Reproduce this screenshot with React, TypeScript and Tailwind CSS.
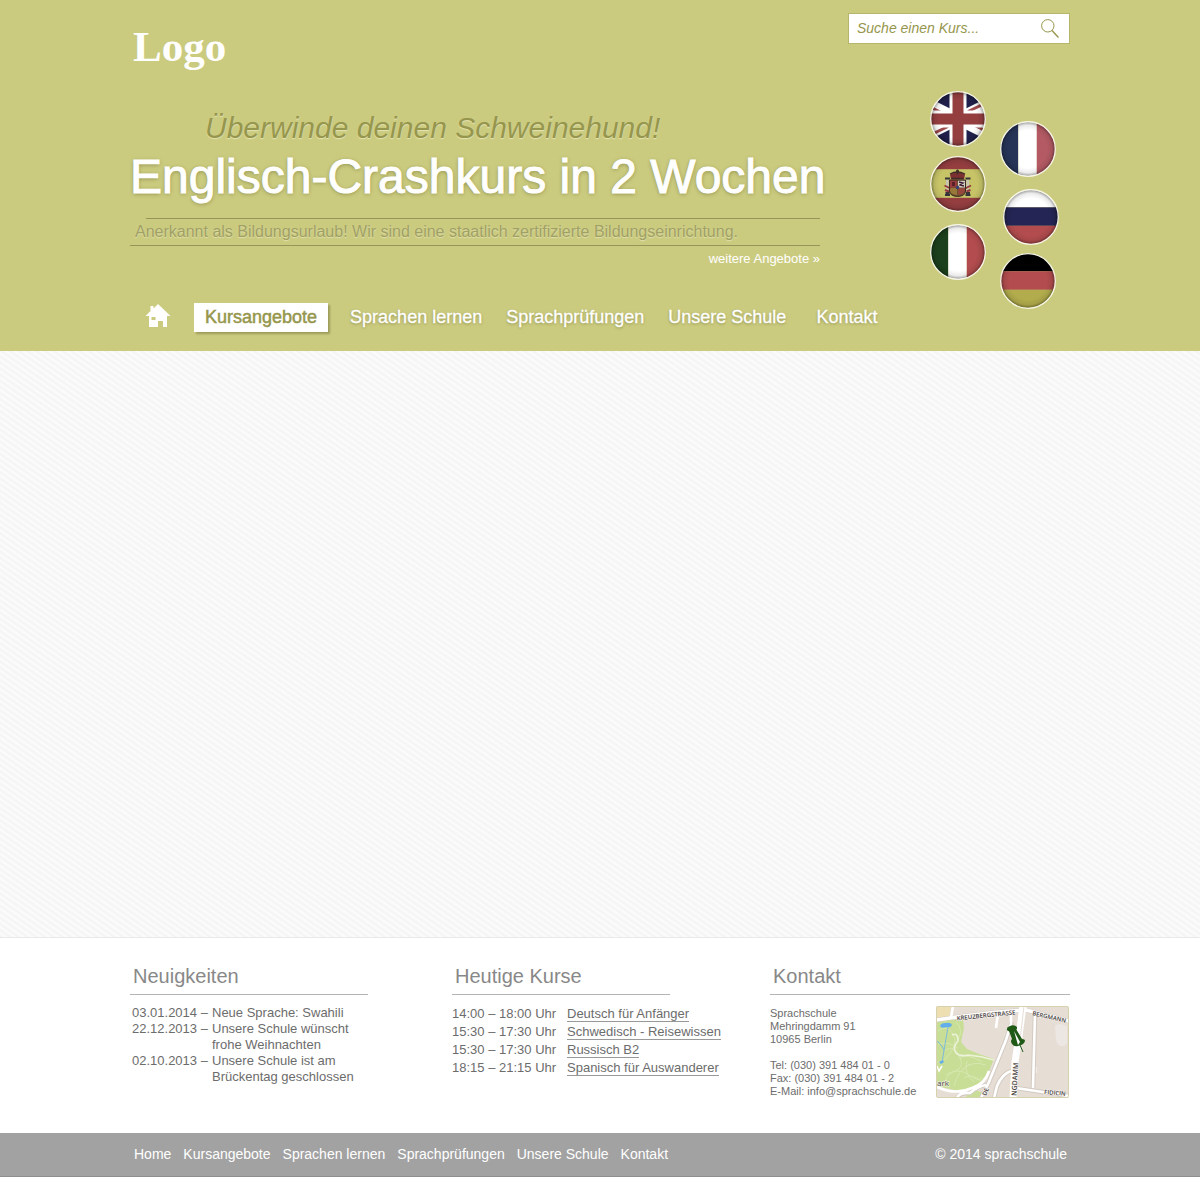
import { useId, type ReactNode } from "react";

const menu = ["Sprachen lernen", "Sprachprüfungen", "Unsere Schule", "Kontakt"];
const footerMenu = ["Home", "Kursangebote", ...menu];

const news = [
  { date: "03.01.2014", lines: ["Neue Sprache: Swahili"] },
  { date: "22.12.2013", lines: ["Unsere Schule wünscht", "frohe Weihnachten"] },
  { date: "02.10.2013", lines: ["Unsere Schule ist am", "Brückentag geschlossen"] },
];

const courses = [
  { time: "14:00 – 18:00 Uhr", name: "Deutsch für Anfänger" },
  { time: "15:30 – 17:30 Uhr", name: "Schwedisch - Reisewissen" },
  { time: "15:30 – 17:30 Uhr", name: "Russisch B2" },
  { time: "18:15 – 21:15 Uhr", name: "Spanisch für Auswanderer" },
];

function Flag({ label, className = "", children }: { label: string; className?: string; children: ReactNode }) {
  const id = useId();
  return (
    <a href="#" aria-label={label} className={`block size-14 ${className}`}>
      <svg viewBox="0 0 56 56" className="size-14">
        <defs>
          <clipPath id={`${id}c`}>
            <circle cx="28" cy="28" r="27.5" />
          </clipPath>
          <radialGradient id={`${id}g`}>
            <stop offset="0.7" stopColor="#000" stopOpacity="0" />
            <stop offset="0.88" stopColor="#000" stopOpacity="0.08" />
            <stop offset="1" stopColor="#000" stopOpacity="0.38" />
          </radialGradient>
        </defs>
        <g clipPath={`url(#${id}c)`}>{children}</g>
        <circle cx="28" cy="28" r="27" fill={`url(#${id}g)`} />
        <circle cx="28" cy="28" r="27.3" fill="none" stroke="#f7f7e6" strokeWidth="1.3" />
      </svg>
    </a>
  );
}

function Stripes({ colors, vertical }: { colors: [string, string, string]; vertical?: boolean }) {
  return (
    <g transform={vertical ? "matrix(0 1 1 0 0 0)" : undefined}>
      <rect width="56" height="18.3" fill={colors[0]} />
      <rect y="18.3" width="56" height="18.5" fill={colors[1]} />
      <rect y="36.8" width="56" height="19.2" fill={colors[2]} />
    </g>
  );
}

function UkFlag() {
  return (
    <>
      <rect width="56" height="56" fill="#20204c" />
      <path d="M-28 0 84 56M84 0-28 56" stroke="#fff" strokeWidth="11.5" />
      <path d="M-4 14 14 23M60 42 42 33M62 9 38 20.500M-6 47 18 35.500" stroke="#a04a4c" strokeWidth="3" />
      <path d="M28 0V56M0 28H56" stroke="#fff" strokeWidth="17" />
      <path d="M28 0V56M0 28H56" stroke="#943e40" strokeWidth="11" />
    </>
  );
}

function SpainFlag() {
  return (
    <>
      <rect width="56" height="56" fill="#943e40" />
      <rect y="13.2" width="56" height="28.6" fill="#c7c468" />
      <path d="M20 18.500q8-5 15 0l-1 5H21z" fill="#7c3032" />
      <path d="M20 18q7-4 15 0M21.500 22.500h12M27.500 13.500v5M26 15h3" stroke="#3f2d25" strokeWidth="1.300" fill="none" />
      <path d="M19.500 24h16v11q0 5-8 5.500q-8-.5-8-5.500z" fill="#70512b" />
      <path d="M20 24.500h7v7h-7z" fill="#973b3f" />
      <path d="M28 24.500h7v7h-7z" fill="#d5cfc6" />
      <path d="M29 26l4 1-3 2 4 1" stroke="#3d1e35" strokeWidth="1.400" fill="none" />
      <path d="M22 26h3v4h-3z" fill="#5a2227" />
      <path d="M20 32h7v7q-6.500-.8-7-4z" fill="#97783a" />
      <path d="M28 32h7v3q-.6 3.400-7 4z" fill="#97483c" />
      <circle cx="27.500" cy="31.500" r="1.800" fill="#33416c" />
      <path d="M17.300 24v14M37.700 24v14" stroke="#c9c5b4" strokeWidth="2.600" />
      <path d="M15 39h5M35.500 39h5M15 22.500h5M35.500 22.500h5M15.500 37h4M36 37h4" stroke="#34343a" strokeWidth="1.800" />
      <path d="M14.500 29.500l6 3M41 29.500l-6 3M15 34l4 1.500M40.500 34l-4 1.500" stroke="#94383a" strokeWidth="1.900" />
      <path d="M19.500 24v11q0 5 8 5.500q8-.5 8-5.500V24z" fill="none" stroke="#392a22" strokeWidth="1" />
    </>
  );
}

function CityMap() {
  return (
    <svg viewBox="0 0 133 92" role="img" aria-label="Karte: Mehringdamm 91" className="block h-[92px] w-[133px] rounded-[2px]">
      <rect width="133" height="92" fill="#e6ddd5" />
      <path d="M0 0H15L13 11 0 13z" fill="#eedfb3" />
      <path d="M0 15 27 13 28 22 25 36 31 43 43 48 58 53 51 70 42 80 24 85 0 80z" fill="#c8de96" />
      <path d="M31 88q8-5 15-2l-2 6H30z" fill="#c8de96" />
      <g fill="none" stroke="#d7e8b1" strokeWidth=".9">
        <path d="M2 25q9-7 15 3t-5 22q-7 9-12 5M20 16q8 8 2 18M9 44q10-5 15 7t-7 15q-9 4-7 14M22 52q10-5 24 4M26 64q10-10 24-5M10 69q12-8 23 0t13 2M18 80q4-16 16-22M31 55q-4 12 7 21M2 38q10-3 20 4M28 72q8-5 17 3" />
      </g>
      <path d="M16 29q6-3 6 6 -6 6-2 12 4 4 12 2 13 1 26 5" fill="none" stroke="#edf2da" strokeWidth="1.600" />
      <path d="M119 20q3-4 12 0v18q-8 6-11-4z" fill="#ece7e2" />
      <path d="M97 61h4v6h-4z" fill="#f0ebe6" />
      <g fill="none" stroke="#d3cbc3" strokeWidth="4.600">
        <path d="M0 14 28 10 62 6 90 4 133 15" />
        <path d="M76 16 70 34 53 76 45 92M58 92 61 80Q66 68 75 65M99 7 97 82M80 82 133 90M21 92q4-6 13-5 8-7 16-8" />
      </g>
      <g fill="none" stroke="#fff">
        <path d="M0 14 28 10 62 6 90 4 133 15" strokeWidth="3.400" />
        <path d="M17 0 15 12M60 22 62 7M75 8 75 18 70 34 53 76 45 92" strokeWidth="2.600" />
        <path d="M58 92 61 80Q66 68 75 65M99 7 97 82M80 82 133 90" strokeWidth="2.600" />
        <path d="M-1 80q20 10 37 2 13-4 17-17M21 92q2-6 13-5 8-7 16-8" strokeWidth="2.600" />
        <path d="M87 0 83 30 79 56 77 92" strokeWidth="7" />
      </g>
      <path d="M88 0 84 34" stroke="#ded5cd" strokeWidth=".8" />
      <path d="M12 21 6 56M0 35q4 1 8 9" stroke="#74b7e4" strokeWidth=".9" fill="none" />
      <path d="M4 20q1-3 5-3 6-1 7 2-1 3-5 2-6 2-7-1zM3 56l4-2 1 2-3 2z" fill="#62aeea" />
      <path d="M1 60l2 5 3-5" fill="none" stroke="#fff" strokeWidth="1.500" />
      <g
        fill="#45413e"
        fontFamily="'Open Sans', 'Noto Sans', sans-serif"
        fontSize="6"
        fontWeight="600"
        stroke="#f8f5f2"
        strokeWidth="1"
        paintOrder="stroke"
      >
        <text transform="translate(21 14.500) rotate(-6)">KREUZBERGSTRASSE</text>
        <text transform="translate(96 9) rotate(13)">BERGMANN</text>
        <text transform="translate(80.500 90) rotate(-87)" fontSize="7">NGDAMM</text>
        <text transform="translate(108 88) rotate(5)">FIDICIN</text>
        <text transform="translate(50 90) rotate(-68)">DE</text>
        <text x="1" y="80" fontSize="8" fontWeight="400">ark</text>
      </g>
      <g fill="#1f5a17">
        <ellipse cx="76" cy="22.500" rx="5.200" ry="3" transform="rotate(-12 76 22.500)" />
        <path d="M73 25l3 8q-2 2 0 5 2 3 6 2 6-1 7-5 0-2-3-2l-6-10z" />
        <path d="M84 39l3 7" stroke="#1f5a17" strokeWidth="1" />
      </g>
      <path d="M78 25l6 11-2 3z" fill="#fff" />
      <rect x=".5" y=".5" width="132" height="91" rx="1.500" fill="none" stroke="#d5d2ad" />
    </svg>
  );
}

function ColumnTitle({ children, className = "" }: { children: ReactNode; className?: string }) {
  return (
    <h2 className={`border-b border-[#b4b4b4] pb-1.5 pl-[3px] text-[20px] leading-6 text-[#888888] ${className}`}>{children}</h2>
  );
}

export default function App() {
  return (
    <div className="flex min-h-screen flex-col bg-white font-['Liberation_Sans',Arial,sans-serif] text-[#6c6c6c]">
      <header className="bg-[#cbcb80] px-4 pt-[13px] pb-[19px] text-white">
        <div className="mx-auto max-w-[940px]">
          <div className="flex h-[78px] items-start justify-between">
            <a href="#" className="mt-2.5 ml-[3px] font-['Liberation_Serif',serif] text-[43px] leading-12 font-bold">
              Logo
            </a>
            <form role="search" className="flex h-[31px] w-[222px] items-center border border-[#b5b56c] bg-white pr-2.5 pl-2">
              <input
                type="search"
                aria-label="Suche einen Kurs"
                placeholder="Suche einen Kurs..."
                className="w-full min-w-0 text-[14px] text-[#96964d] italic outline-none placeholder:text-[#96964d]"
              />
              <button type="submit" aria-label="Suchen" className="shrink-0">
                <svg viewBox="0 0 18 20" className="h-5 w-[18px]" fill="none" stroke="#96964d">
                  <circle cx="6.800" cy="6.800" r="6.200" strokeWidth="1" />
                  <path d="M11 11.500 17.500 18.500" strokeWidth="1.400" />
                </svg>
              </button>
            </form>
          </div>

          <div className="flex items-start justify-between">
            <div className="pt-4">
              <section className="w-[690px]">
                <p className="pl-[75px] text-[30px] leading-[42px] text-[#96964d] italic [text-shadow:0_1px_1px_#e4e4b4]">
                  Überwinde deinen Schweinehund!
                </p>
                <h1 className="text-[48px] leading-[56px] whitespace-nowrap [-webkit-text-stroke:1px_white] [text-shadow:0_1px_4px_#8c8c48]">
                  Englisch-Crashkurs in 2 Wochen
                </h1>
                <hr className="mt-[13px] ml-4 border-[#96965a]" />
                <p className="border-b border-[#96965a] pl-[5px] text-[16px] leading-[26px] whitespace-nowrap text-[#a0a063] [text-shadow:0_1px_1px_#e0e0ae]">
                  Anerkannt als Bildungsurlaub! Wir sind eine staatlich zertifizierte Bildungseinrichtung.
                </p>
                <a href="#" className="mt-1 block text-right text-[13px] leading-[18px]">
                  weitere Angebote »
                </a>
              </section>

              <nav aria-label="Hauptmenü" className="mt-[35px] flex h-[29px] items-center pl-[15px] text-[18px] whitespace-nowrap">
                <a href="#" aria-label="Home">
                  <svg viewBox="0 0 26 24" className="mb-1 h-6 w-[26px]" fill="#fff">
                    <path
                      fillRule="evenodd"
                      d="M13 0 25.500 12H22V23H18V17H13V23H4V12H0.500L5.500 7V2H8.500V4.500zM6.500 13V16H10.500V13z"
                    />
                  </svg>
                </a>
                <a
                  href="#"
                  aria-current="page"
                  className="ml-[23px] bg-white px-[11px] leading-[29px] text-[#96964d] shadow-[2px_2px_2px_#9c9c58] [-webkit-text-stroke:0.5px_#96964d]"
                >
                  Kursangebote
                </a>
                <div className="ml-[22px] flex gap-6 [text-shadow:0_1px_3px_#8c8c48]">
                  {menu.map((item) => (
                    <a key={item} href="#" className="[-webkit-text-stroke:0.3px_white] last:ml-1.5">
                      {item}
                    </a>
                  ))}
                </div>
              </nav>
            </div>

            <div className="mr-[11px] flex gap-3.5">
              <div className="flex flex-col">
                <Flag label="Englisch">
                  <UkFlag />
                </Flag>
                <Flag label="Spanisch" className="mt-[9px]">
                  <SpainFlag />
                </Flag>
                <Flag label="Italienisch" className="mt-3">
                  <Stripes vertical colors={["#1c401c", "#ffffff", "#b24c4e"]} />
                </Flag>
              </div>
              <div className="flex flex-col pt-[30px]">
                <Flag label="Französisch">
                  <Stripes vertical colors={["#263458", "#ffffff", "#b45a64"]} />
                </Flag>
                <Flag label="Russisch" className="mt-3 ml-[3px]">
                  <Stripes colors={["#ffffff", "#252555", "#b24c4e"]} />
                </Flag>
                <Flag label="Deutsch" className="mt-2">
                  <Stripes colors={["#000000", "#b24c4e", "#b2ac4c"]} />
                </Flag>
              </div>
            </div>
          </div>
        </div>
      </header>

      <main className="grow bg-[repeating-linear-gradient(35deg,#f5f5f5_0_1px,#fbfbfb_3px_4px,#f5f5f5_5px)]" />

      <footer>
        <div className="border-t border-[#e9e9e9] px-4 pt-[26px] pb-[35px]">
          <div className="mx-auto grid max-w-[940px] grid-cols-[322fr_318fr_300fr]">
            <section>
              <ColumnTitle className="w-[238px]">Neuigkeiten</ColumnTitle>
              <dl className="mt-2.5 grid grid-cols-[80px_1fr] pl-0.5 text-[13px] leading-4">
                {news.map((item) => (
                  <div key={item.date} className="contents">
                    <dt className="whitespace-nowrap">{item.date} –</dt>
                    <dd>
                      {item.lines.map((line) => (
                        <span key={line} className="block">
                          {line}
                        </span>
                      ))}
                    </dd>
                  </div>
                ))}
              </dl>
            </section>

            <section>
              <ColumnTitle className="w-[218px]">Heutige Kurse</ColumnTitle>
              <table className="mt-2.5 text-[13px] leading-[18px] whitespace-nowrap">
                <tbody>
                  {courses.map((course) => (
                    <tr key={course.name}>
                      <td className="w-[115px] p-0">{course.time}</td>
                      <td className="p-0">
                        <a href="#" className="border-b border-[#999]">
                          {course.name}
                        </a>
                      </td>
                    </tr>
                  ))}
                </tbody>
              </table>
            </section>

            <section>
              <ColumnTitle>Kontakt</ColumnTitle>
              <div className="mt-[11px] flex justify-between pr-px">
                <address className="pt-px text-[11px] leading-[13px] whitespace-nowrap not-italic">
                  Sprachschule
                  <br />
                  Mehringdamm 91
                  <br />
                  10965 Berlin
                  <br />
                  <br />
                  Tel: (030) 391 484 01 - 0
                  <br />
                  Fax: (030) 391 484 01 - 2
                  <br />
                  E-Mail: <a href="mailto:info@sprachschule.de">info@sprachschule.de</a>
                </address>
                <CityMap />
              </div>
            </section>
          </div>
        </div>

        <div className="border-b border-[#8f8f8f] bg-[#a2a2a2] px-4 text-[14px] leading-[43px] text-white">
          <div className="mx-auto flex max-w-[940px] justify-between pr-[3px] pl-1">
            <nav aria-label="Fußmenü" className="flex gap-3">
              {footerMenu.map((item) => (
                <a key={item} href="#">
                  {item}
                </a>
              ))}
            </nav>
            <p>© 2014 sprachschule</p>
          </div>
        </div>
      </footer>
    </div>
  );
}
